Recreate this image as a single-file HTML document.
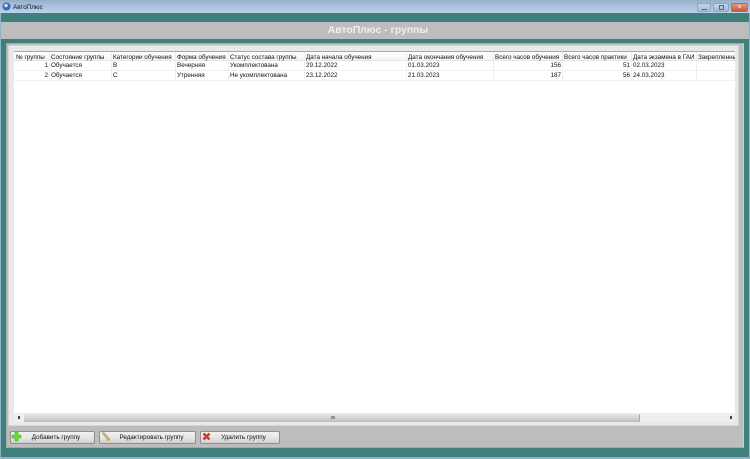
<!DOCTYPE html>
<html><head><meta charset="utf-8">
<style>
html,body{margin:0;padding:0;width:750px;height:459px;overflow:hidden;background:#3f7f7c;font-family:"Liberation Sans",sans-serif}
#w{position:absolute;left:0;top:0;width:750px;height:459px;filter:blur(.3px)}
.a{position:absolute;box-sizing:border-box}
.t{position:absolute;font-size:6.3px;line-height:9px;color:#111;white-space:nowrap}
.r{text-align:right}
.v{position:absolute;width:1px;background:#f0f0f0}
.h{position:absolute;width:1px;background:#ebebeb;top:52px;height:9px}
.btn{position:absolute;top:431px;height:13px;box-sizing:border-box;border:1px solid #8f8f8f;border-radius:2px;background:linear-gradient(#f2f2f2,#e6e6e6 50%,#cfcfcf);font-size:6.3px;line-height:12px;color:#111;text-align:center}
</style></head><body><div id="w">
<div class="a" style="left:0;top:0;width:750px;height:13px;background:linear-gradient(#98aec6,#a6bfdc 40%,#b9d1ea)"></div>
<div class="a" style="left:0;top:13px;width:750px;height:9px;background:#3f7f7c"></div>
<svg class="a" style="left:2px;top:2px" width="9" height="9"><circle cx="4.5" cy="4.5" r="4" fill="#2f6fb5"/><circle cx="4" cy="3.5" r="1.8" fill="#cfe3f5"/></svg>
<div class="t" style="left:13px;top:3px">АвтоПлюс</div>
<div class="a" style="left:697px;top:3px;width:14px;height:9px;border:1px solid #8ea5bf;border-radius:2px;background:linear-gradient(#c5d6e8,#a5bbd3)"><div class="a" style="left:4px;top:5px;width:5px;height:1px;background:#667"></div></div>
<div class="a" style="left:713px;top:3px;width:16px;height:9px;border:1px solid #8ea5bf;border-radius:2px;background:linear-gradient(#c5d6e8,#a5bbd3)"><div class="a" style="left:5px;top:1px;width:5px;height:5px;border:1px solid #667"></div></div>
<div class="a" style="left:731px;top:3px;width:17px;height:9px;border:1px solid #a5705f;border-radius:2px;background:linear-gradient(#e09a80,#c9583c);color:#fff;font-size:7px;line-height:7px;text-align:center">×</div>

<div class="a" style="left:0;top:22px;width:750px;height:17px;background:#bdbdbd"></div>
<div class="a" style="left:3px;top:22px;width:750px;height:17px;text-align:center;font-weight:bold;font-size:10.4px;line-height:17px;color:#f0f0f0">АвтоПлюс - группы</div>

<div class="a" style="left:0;top:457px;width:750px;height:2px;background:#8db4c4"></div>
<div class="a" style="left:0;top:13px;width:1px;height:446px;background:#8db4c4"></div>
<div class="a" style="left:749px;top:13px;width:1px;height:446px;background:#8db4c4"></div>

<div class="a" style="left:6px;top:43px;width:738px;height:405px;background:#bdbdbd;border:1px solid #9a9a9a;border-color:#a8a8a8 #d0d0d0 #a8a8a8 #a8a8a8"></div>
<div class="a" style="left:8px;top:45px;width:731px;height:381px;background:#e9e9e5;border:1px solid #d5d5d5"></div>
<div class="a" style="left:14px;top:51px;width:721px;height:362px;background:#fff;border-top:1px solid #a8a8a8"></div>

<div class="a" style="left:14px;top:52px;width:721px;height:9px;background:linear-gradient(#fff,#f4f4f4)"></div>
<div class="a" style="left:14px;top:60px;width:721px;height:1px;background:#e4e4e4"></div>
<div class="a" style="left:14px;top:70px;width:721px;height:1px;background:#f0f0f0"></div>
<div class="a" style="left:14px;top:80px;width:721px;height:1px;background:#f0f0f0"></div>
<div class="h" style="left:49px"></div><div class="h" style="left:111px"></div><div class="h" style="left:175px"></div><div class="h" style="left:228px"></div><div class="h" style="left:304px"></div><div class="h" style="left:406px"></div><div class="h" style="left:493px"></div><div class="h" style="left:562px"></div><div class="h" style="left:631px"></div><div class="h" style="left:696px"></div>
<div class="v" style="left:49px;top:61px;height:19px"></div><div class="v" style="left:111px;top:61px;height:19px"></div><div class="v" style="left:175px;top:61px;height:19px"></div><div class="v" style="left:228px;top:61px;height:19px"></div><div class="v" style="left:304px;top:61px;height:19px"></div><div class="v" style="left:406px;top:61px;height:19px"></div><div class="v" style="left:493px;top:61px;height:19px"></div><div class="v" style="left:562px;top:61px;height:19px"></div><div class="v" style="left:631px;top:61px;height:19px"></div><div class="v" style="left:696px;top:61px;height:19px"></div>

<div class="t" style="left:16px;top:52.5px">№ группы</div>
<div class="t" style="left:51px;top:52.5px">Состояние группы</div>
<div class="t" style="left:113px;top:52.5px">Категории обучения</div>
<div class="t" style="left:177px;top:52.5px">Форма обучения</div>
<div class="t" style="left:230px;top:52.5px">Статус состава группы</div>
<div class="t" style="left:306px;top:52.5px">Дата начала обучения</div>
<div class="t" style="left:408px;top:52.5px">Дата окончания обучения</div>
<div class="t" style="left:495px;top:52.5px">Всего часов обучения</div>
<div class="t" style="left:564px;top:52.5px">Всего часов практики</div>
<div class="t" style="left:633px;top:52.5px">Дата экзамена в ГАИ</div>
<div class="a" style="left:698px;top:52px;width:37px;height:9px;overflow:hidden"><div class="t" style="left:0;top:.5px">Закрепленный</div></div>

<div class="t r" style="left:14px;width:34px;top:61px">1</div>
<div class="t" style="left:51px;top:61px">Обучается</div>
<div class="t" style="left:113px;top:61px">В</div>
<div class="t" style="left:177px;top:61px">Вечерняя</div>
<div class="t" style="left:230px;top:61px">Укомплектована</div>
<div class="t" style="left:306px;top:61px">29.12.2022</div>
<div class="t" style="left:408px;top:61px">01.03.2023</div>
<div class="t r" style="left:494px;width:67px;top:61px">156</div>
<div class="t r" style="left:563px;width:67px;top:61px">51</div>
<div class="t" style="left:633px;top:61px">02.03.2023</div>

<div class="t r" style="left:14px;width:34px;top:71px">2</div>
<div class="t" style="left:51px;top:71px">Обучается</div>
<div class="t" style="left:113px;top:71px">С</div>
<div class="t" style="left:177px;top:71px">Утренняя</div>
<div class="t" style="left:230px;top:71px">Не укомплектована</div>
<div class="t" style="left:306px;top:71px">23.12.2022</div>
<div class="t" style="left:408px;top:71px">21.03.2023</div>
<div class="t r" style="left:494px;width:67px;top:71px">187</div>
<div class="t r" style="left:563px;width:67px;top:71px">56</div>
<div class="t" style="left:633px;top:71px">24.03.2023</div>

<div class="a" style="left:14px;top:413px;width:721px;height:9px;background:#eeeeee"></div>
<div class="a" style="left:24px;top:414px;width:616px;height:8px;background:linear-gradient(#e6e6e6,#d6d6d6 45%,#bcbcc0);border-radius:1px;border-right:1px solid #aaa"></div>
<div class="a" style="left:331px;top:416px;width:4px;height:3px;background:#777;opacity:.7"></div>
<div class="a" style="left:18px;top:416px;width:2px;height:3px;background:#444"></div>
<div class="a" style="left:730px;top:416px;width:2px;height:3px;background:#444"></div>

<div class="btn" style="left:10px;width:85px;padding-left:7px">Добавить группу</div>
<div class="btn" style="left:99px;width:97px;padding-left:8px">Редактировать группу</div>
<div class="btn" style="left:200px;width:80px;padding-left:7px">Удалить группу</div>
<svg class="a" style="left:11px;top:431px" width="11" height="11"><path d="M4 1h3v3h3v3H7v3H4V7H1V4h3z" fill="#5ee02a" stroke="#3fae1c" stroke-width=".5"/></svg>
<svg class="a" style="left:101px;top:432px" width="10" height="10"><path d="M1 1l2-.5 6 6.5-1.5 2z" fill="#d8b45a" stroke="#8f8a6a" stroke-width=".5"/></svg>
<svg class="a" style="left:202px;top:432px" width="9" height="9"><path d="M1.5 1.5l6 6M7.5 1.5l-6 6" stroke="#c8402a" stroke-width="2.6"/></svg>
</div></body></html>
